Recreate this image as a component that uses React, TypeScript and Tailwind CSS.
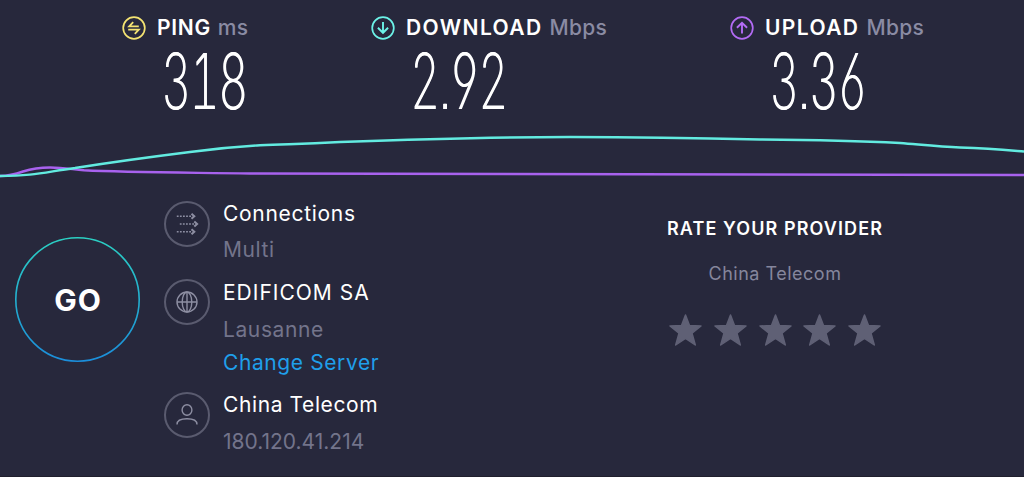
import type { ReactNode } from "react";
import clsx from "clsx";

function PingIcon() {
  return (
    <svg className="size-6" viewBox="0 0 24 24" fill="none" stroke="#f4e372" strokeWidth="1.7">
      <circle cx="12" cy="12" r="10.8" />
      <path d="M16.8 10.3H7.2l4-4.2M6.2 13.7h10.6l-4 4.2" strokeWidth="1.8" />
    </svg>
  );
}

function DownloadIcon() {
  return (
    <svg className="size-6" viewBox="0 0 24 24" fill="none" stroke="#6cf3e8" strokeWidth="1.7">
      <circle cx="12" cy="12" r="10.8" />
      <path d="M12 6v10.8M6.9 11.8l5.1 5 5.1-5" strokeWidth="1.9" />
    </svg>
  );
}

function UploadIcon() {
  return (
    <svg className="size-6" viewBox="0 0 24 24" fill="none" stroke="#b36bf5" strokeWidth="1.7">
      <circle cx="12" cy="12" r="10.8" />
      <path d="M12 17.6V6.8M6.9 11.8l5.1-5 5.1 5" strokeWidth="1.9" />
    </svg>
  );
}

function ConnectionsIcon() {
  return (
    <svg className="h-6 w-6" viewBox="0 0 24 24" fill="none" stroke="#8d8ea2" strokeWidth="1.6">
      <path d="M1.8 4.3h15M4.8 12h15M1.8 19.7h15" strokeDasharray="1.8 1.3" />
      <path d="M16.5 1.8L19.3 4.3l-2.8 2.5M19.3 9.5l2.8 2.5-2.8 2.5M16.5 17.2l2.8 2.5-2.8 2.5" strokeWidth="2" />
    </svg>
  );
}

function GlobeIcon() {
  return (
    <svg className="h-6 w-6" viewBox="0 0 24 24" fill="none" stroke="#8d8ea2" strokeWidth="1.4">
      <circle cx="12" cy="12" r="10" />
      <ellipse cx="12" cy="12" rx="4.8" ry="10" />
      <path d="M2 12h20M12 2v20" />
    </svg>
  );
}

function UserIcon() {
  return (
    <svg className="h-6 w-6" viewBox="0 0 24 24" fill="none" stroke="#8d8ea2" strokeWidth="1.4">
      <ellipse cx="12" cy="7" rx="4.9" ry="5.3" />
      <path d="M2 21.5c0-4 3-5.7 10-5.7s10 1.7 10 5.7" />
    </svg>
  );
}

type MetricProps = {
  icon: ReactNode;
  label: string;
  unit: string;
  value: string;
  className?: string;
  labelClass?: string;
};

function Metric({ icon, label, unit, value, className, labelClass = "tracking-[1.4px]" }: MetricProps) {
  return (
    <div className={clsx("shrink-0 pt-4", className)}>
      <div className="flex h-6 items-center whitespace-nowrap text-[21px] leading-6">
        {icon}
        <span className={clsx("ml-[11px] font-semibold text-white", labelClass)}>{label}</span>
        <span className="ml-[7px] font-medium tracking-[0.3px] text-[#8a8ba3]">{unit}</span>
      </div>
      <div className="mt-[2px] ml-[38.5px] h-[78px] w-[180px] origin-left scale-x-[0.6] whitespace-nowrap text-[77px] leading-[78px] font-extralight tracking-[-2.2px] text-white [font-feature-settings:'tnum','cv03','cv04','ss07'] [text-shadow:1px_0_0_#fff]">
        {value}
      </div>
    </div>
  );
}

function InfoRow({ icon, className, children }: { icon: ReactNode; className?: string; children: ReactNode }) {
  return (
    <div className={clsx("flex", className)}>
      <div className="flex size-[46px] shrink-0 items-center justify-center rounded-full border-2 border-[#5a5b6f]">
        {icon}
      </div>
      <div className="ml-[13px] whitespace-nowrap text-[21px] leading-[26px] tracking-[0.6px]">{children}</div>
    </div>
  );
}

function Star() {
  return (
    <svg className="h-8 w-[33px]" viewBox="0 0 33 32" fill="#5f6075" stroke="#5f6075" strokeWidth="1.5" strokeLinejoin="round">
      <path d="M16.5 1l4 10.5 11.5.5-9 7.2 3.3 11.8-9.8-6.6L6.7 31 10 19.2 1 12l11.5-.5z" />
    </svg>
  );
}

export default function App() {
  return (
    <main className="h-[477px] w-[1024px] overflow-hidden border-b border-[#201f2d] bg-[#27283c] font-['Inter',sans-serif]">
      <section className="flex h-[125px] pl-[122px]">
        <Metric
          icon={<PingIcon />}
          label="PING"
          unit="ms"
          value="318"
          className="w-[249px]"
          labelClass="tracking-[0.7px]"
        />
        <Metric icon={<DownloadIcon />} label="DOWNLOAD" unit="Mbps" value="2.92" className="w-[359px]" />
        <Metric icon={<UploadIcon />} label="UPLOAD" unit="Mbps" value="3.36" className="w-[249px]" />
      </section>

      <svg className="block h-[65px] w-[1024px]" viewBox="0 0 1024 65" fill="none" strokeWidth="2.4">
        <path
          d="M0 51C10 51 16 49 23 46.5C34 43 40 42.5 50 42.5C62 42.5 70 44 84 45.3C125 47.5 180 47.5 250 48.5C400 49.5 700 50 1024 50"
          stroke="#a862ee"
        />
        <path
          d="M0 51C35 51 45 47 75 43C110 37.5 150 32 190 27C220 23 230 22 260 20.3C290 19 300 19 340 17C420 14 500 12 570 12C640 12 700 13 760 14.5C820 15 860 16 900 18C925 20 940 21.5 960 22.5C990 23.5 1000 24.5 1024 26.5"
          stroke="#62ebe0"
        />
      </svg>

      <section className="flex">
        <button className="mt-[47px] ml-[14px] grid size-[126px] shrink-0 place-items-center">
          <svg className="col-start-1 row-start-1 size-[126px]" viewBox="0 0 126 126" fill="none">
            <defs>
              <linearGradient id="ring" x1="0" y1="0" x2="0" y2="1">
                <stop offset="0" stopColor="#2bd0c3" />
                <stop offset="1" stopColor="#1b8edb" />
              </linearGradient>
            </defs>
            <circle cx="63.5" cy="62.5" r="61.7" stroke="url(#ring)" strokeWidth="1.6" />
          </svg>
          <span className="col-start-1 row-start-1 pl-[2px] text-[30px] leading-none font-bold tracking-[1px] text-white">
            GO
          </span>
        </button>

        <div className="ml-[24px] w-[400px] shrink-0 pt-[11px]">
          <InfoRow icon={<ConnectionsIcon />} className="h-[78px]">
            <p className="tracking-[0.7px] text-white">Connections</p>
            <p className="mt-[10px] text-[#73748b]">Multi</p>
          </InfoRow>
          <InfoRow icon={<GlobeIcon />} className="h-[113px]">
            <p className="pt-px tracking-[1px] text-white">EDIFICOM SA</p>
            <p className="mt-[11px] text-[#73748b]">Lausanne</p>
            <p className="mt-[7px] text-[#1f9fea]">Change Server</p>
          </InfoRow>
          <InfoRow icon={<UserIcon />}>
            <p className="text-white">China Telecom</p>
            <p className="mt-[11px] tracking-normal text-[#73748b]">180.120.41.214</p>
          </InfoRow>
        </div>

        <div className="ml-[61px] flex w-[300px] flex-col items-center pt-[27px] whitespace-nowrap">
          <h2 className="text-[18px] leading-6 font-semibold tracking-[1.1px] text-white">RATE YOUR PROVIDER</h2>
          <p className="mt-[21px] text-[18px] leading-6 tracking-[0.5px] text-[#85869c]">China Telecom</p>
          <div className="mt-[28px] flex gap-[11.6px]">
            {[1, 2, 3, 4, 5].map((n) => (
              <Star key={n} />
            ))}
          </div>
        </div>
      </section>
    </main>
  );
}
